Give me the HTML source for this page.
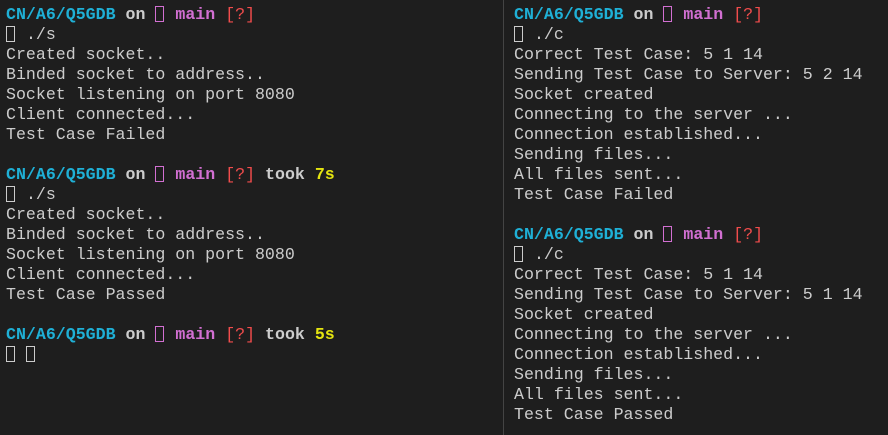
<!DOCTYPE html>
<html><head><meta charset="utf-8"><style>
html,body{margin:0;padding:0;background:#1e1e1e;width:888px;height:435px;overflow:hidden}
.pane{position:absolute;top:5px;font:16.6px/20px "Liberation Mono",monospace;color:#cccccc;white-space:pre}
#l{left:6px}#r{left:514px}
#div{position:absolute;left:503px;top:0;width:1px;height:435px;background:#444}
.c{color:#1fb0d6;font-weight:bold}.w{font-weight:bold;color:#cccccc}.m{color:#d26fd2;font-weight:bold}.rd{color:#f14c4c}.y{color:#e5e510;font-weight:bold}
.b{display:inline-block;width:9px;height:16px;border:1px solid #ccc;vertical-align:-3px;box-sizing:border-box;margin-right:1px}
.bm{border-color:#d26fd2}
</style></head><body>
<div id="div"></div>
<div class="pane" id="l"><span class="c">CN/A6/Q5GDB</span> <span class="w">on</span> <span class="b bm"></span> <span class="m">main</span> <span class="rd">[?]</span>
<span class="b"></span> ./s
Created socket..
Binded socket to address..
Socket listening on port 8080
Client connected...
Test Case Failed

<span class="c">CN/A6/Q5GDB</span> <span class="w">on</span> <span class="b bm"></span> <span class="m">main</span> <span class="rd">[?]</span> <span class="w">took</span> <span class="y">7s</span>
<span class="b"></span> ./s
Created socket..
Binded socket to address..
Socket listening on port 8080
Client connected...
Test Case Passed

<span class="c">CN/A6/Q5GDB</span> <span class="w">on</span> <span class="b bm"></span> <span class="m">main</span> <span class="rd">[?]</span> <span class="w">took</span> <span class="y">5s</span>
<span class="b"></span> <span class="b"></span></div>
<div class="pane" id="r"><span class="c">CN/A6/Q5GDB</span> <span class="w">on</span> <span class="b bm"></span> <span class="m">main</span> <span class="rd">[?]</span>
<span class="b"></span> ./c
Correct Test Case: 5 1 14
Sending Test Case to Server: 5 2 14
Socket created
Connecting to the server ...
Connection established...
Sending files...
All files sent...
Test Case Failed

<span class="c">CN/A6/Q5GDB</span> <span class="w">on</span> <span class="b bm"></span> <span class="m">main</span> <span class="rd">[?]</span>
<span class="b"></span> ./c
Correct Test Case: 5 1 14
Sending Test Case to Server: 5 1 14
Socket created
Connecting to the server ...
Connection established...
Sending files...
All files sent...
Test Case Passed</div>
</body></html>
